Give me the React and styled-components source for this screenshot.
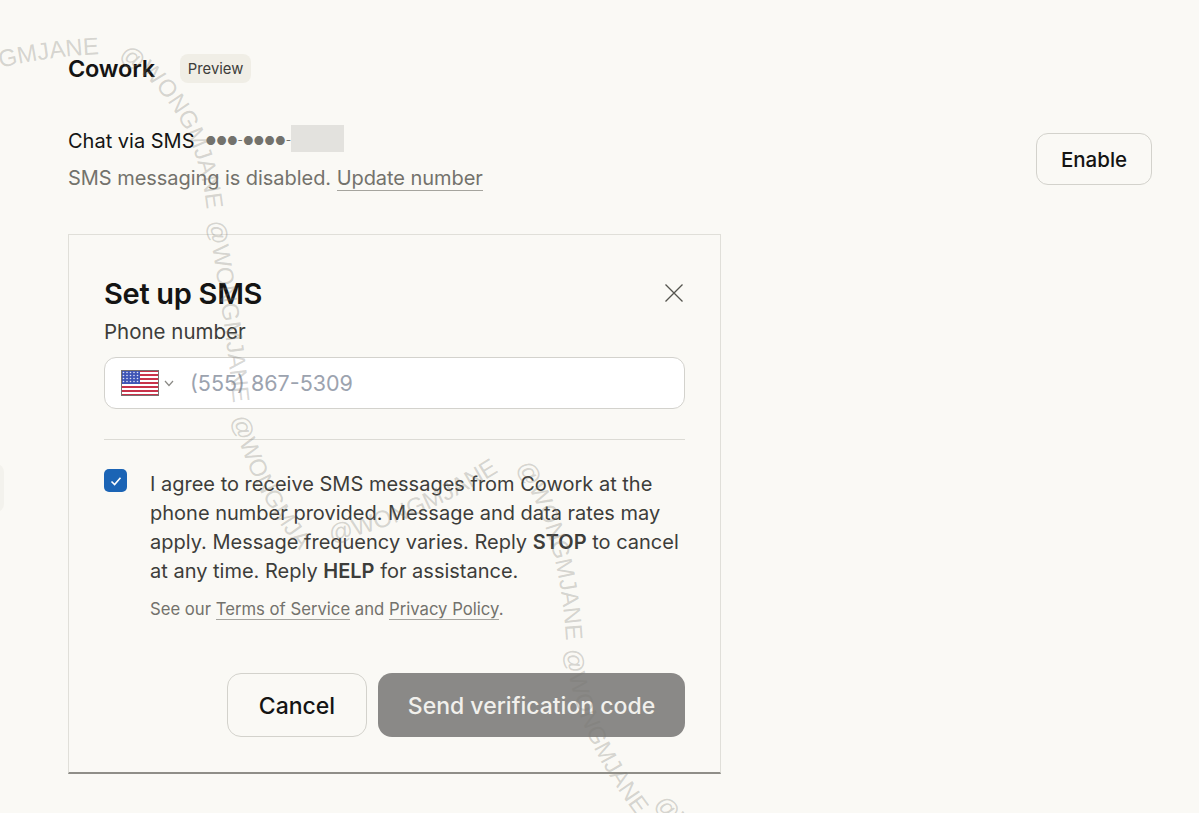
import React from "react";
import styled, { createGlobalStyle } from "styled-components";

const GlobalStyle = createGlobalStyle`
  html, body {
    margin: 0;
    height: 100%;
    overflow: hidden;
    background: #faf9f5;
    font-family: Inter, "Liberation Sans", sans-serif;
    color: #141413;
  }
  * { box-sizing: border-box; }
`;

// the strands of the curved watermark, each long enough for its text
const strands = [
  "M -79 92 C -25 72 35 56 105 54",
  "M 118 58 C 168 85 200 140 207 212",
  "M 208 222 C 216 270 226 330 234 410",
  "M 232 418 C 246 470 268 512 304 556",
  "M 331 542 C 385 530 440 508 495 474",
  "M 516 467 C 545 510 562 570 566 640",
  "M 565 650 C 572 710 595 760 636 815",
  "M 653 806 C 680 830 710 860 760 930",
];

const Watermark = () => (
  <WatermarkLayer viewBox="0 0 1199 813">
    <defs>
      {strands.map((d, i) => (
        <path key={i} id={`strand-${i}`} d={d} />
      ))}
    </defs>
    {strands.map((d, i) => (
      <WatermarkText key={i}>
        <textPath href={`#strand-${i}`}>@WONGMJANE</textPath>
      </WatermarkText>
    ))}
  </WatermarkLayer>
);

const UsFlag = () => (
  <svg width="38" height="26" viewBox="0 0 38 26">
    <rect width="38" height="26" fill="#fff" />
    {[0, 2, 4, 6, 8, 10, 12].map((n) => (
      <rect key={n} y={n * 2} width="38" height="2" fill="#c8334a" />
    ))}
    <rect width="19" height="14" fill="#3f55b5" />
    {[2.5, 5.5, 8.5, 11.5].map((y) =>
      [2.5, 6, 9.5, 13, 16.5].map((x) => (
        <circle key={`${x}-${y}`} cx={x} cy={y} r="0.8" fill="#dfe4f5" />
      ))
    )}
    <rect x="0.5" y="0.5" width="37" height="25" fill="none" stroke="#77706f" />
  </svg>
);

const App = () => (
  <Page>
    <GlobalStyle />
    <Heading>
      <Title>Cowork</Title>
      <Badge>Preview</Badge>
    </Heading>

    <SmsRow>
      <div>
        <ChatLine>
          Chat via SMS
          <Masked>●●●-●●●●-</Masked>
          <Redacted />
        </ChatLine>
        <Status>
          SMS messaging is disabled. <StatusLink>Update number</StatusLink>
        </Status>
      </div>
      <EnableButton>Enable</EnableButton>
    </SmsRow>

    <Card>
      <CardHeader>
        <CardTitle>Set up SMS</CardTitle>
        <svg width="20" height="20" viewBox="0 0 20 20" fill="none" stroke="#55544f" strokeWidth="1.3">
          <path d="M1.5 1.5 L18.5 18.5 M18.5 1.5 L1.5 18.5" />
        </svg>
      </CardHeader>
      <FieldLabel>Phone number</FieldLabel>
      <PhoneInput>
        <UsFlag />
        <ChevronIcon width="12" height="12" viewBox="0 0 12 12" fill="none" stroke="#8a8985" strokeWidth="1.2">
          <path d="M2 4 L6 8.5 L10 4" />
        </ChevronIcon>
        <Placeholder>(555) 867-5309</Placeholder>
      </PhoneInput>
      <Divider />
      <Consent>
        <CheckBox>
          <svg width="14" height="14" viewBox="0 0 14 14" fill="none" stroke="#fff" strokeWidth="1.6">
            <path d="M2.5 7.5 L5.6 10.5 L11.5 3.8" />
          </svg>
        </CheckBox>
        <div>
          <ConsentText>
            I agree to receive SMS messages from Cowork at the
            <br />
            phone number provided. Message and data rates may
            <br />
            apply. Message frequency varies. Reply <strong>STOP</strong> to cancel
            <br />
            at any time. Reply <strong>HELP</strong> for assistance.
          </ConsentText>
          <Legal>
            See our <LegalLink>Terms of Service</LegalLink> and <LegalLink>Privacy Policy</LegalLink>.
          </Legal>
        </div>
      </Consent>
      <Actions>
        <CancelButton>Cancel</CancelButton>
        <SendButton>Send verification code</SendButton>
      </Actions>
    </Card>

    <EdgeTab />
    <Watermark />
  </Page>
);

const Page = styled.div`
  position: relative;
  width: 1199px;
  height: 813px;
  overflow: hidden;
  padding: 53px 47px 0 68px;
`;

const WatermarkLayer = styled.svg`
  position: absolute;
  inset: 0;
  width: 1199px;
  height: 813px;
  pointer-events: none;
`;

const WatermarkText = styled.text`
  font-family: "Liberation Sans", sans-serif;
  font-size: 24px;
  fill: #7a7973;
  fill-opacity: 0.3;
`;

const EdgeTab = styled.div`
  position: absolute;
  left: -20px;
  top: 464px;
  width: 24px;
  height: 48px;
  border-radius: 8px;
  background: #f3f2ed;
`;

const Heading = styled.div`
  display: flex;
  align-items: center;
  gap: 25px;
  height: 30px;
`;

const Title = styled.h1`
  margin: 0;
  font-size: 23.5px;
  font-weight: 600;
  letter-spacing: -0.2px;
`;

const Badge = styled.span`
  display: flex;
  align-items: center;
  height: 29px;
  padding: 2px 8px 0;
  border-radius: 8px;
  background: #f0eee6;
  font-size: 14.8px;
  color: #3d3d3a;
`;

const SmsRow = styled.div`
  display: flex;
  justify-content: space-between;
  align-items: center;
  margin-top: 41px;
  height: 70px;
`;

const ChatLine = styled.div`
  display: flex;
  align-items: center;
  height: 27px;
  margin-top: -1px;
  font-size: 20px;
`;

const Masked = styled.span`
  margin-left: 11px;
  font-size: 11.7px;
  color: #73726c;
`;

const Redacted = styled.span`
  width: 53px;
  height: 27px;
  margin-top: -5px;
  background: #e3e2de;
`;

const Status = styled.div`
  margin-top: 11px;
  font-size: 20px;
  letter-spacing: -0.05px;
  color: #73726c;
`;

const StatusLink = styled.span`
  border-bottom: 1px solid #a5a49e;
`;

const EnableButton = styled.button`
  width: 116px;
  height: 52px;
  border: 1px solid #d3d2cc;
  border-radius: 12px;
  background: transparent;
  font: 500 20.5px Inter, sans-serif;
  color: #141413;
`;

const Card = styled.section`
  width: 653px;
  height: 540px;
  margin-top: 40px;
  padding: 39px 35px 0;
  border: 1px solid #e0dfd9;
  border-bottom: 2px solid #8f8e88;
`;

const CardHeader = styled.div`
  display: flex;
  justify-content: space-between;
  align-items: center;
  height: 38px;
  padding-right: 1px;
`;

const CardTitle = styled.h2`
  margin: 0;
  font-size: 29px;
  font-weight: 600;
  letter-spacing: -0.3px;
`;

const FieldLabel = styled.div`
  margin-top: 7px;
  font-size: 20.5px;
  line-height: 26px;
  color: #3d3d3a;
`;

const PhoneInput = styled.div`
  display: flex;
  align-items: center;
  height: 52px;
  margin-top: 12px;
  padding-left: 16px;
  border: 1px solid #d3d2cd;
  border-radius: 12px;
  background: #fff;
`;

const ChevronIcon = styled.svg`
  margin-left: 4px;
`;

const Placeholder = styled.span`
  margin-left: 15px;
  font-size: 21.5px;
  color: #9ca3af;
`;

const Divider = styled.hr`
  margin: 30px 0 29px;
  border: 0;
  border-top: 1px solid #dcdbd5;
`;

const Consent = styled.div`
  display: flex;
  gap: 23px;
`;

const CheckBox = styled.span`
  display: flex;
  align-items: center;
  justify-content: center;
  flex: none;
  width: 23px;
  height: 23px;
  border-radius: 5px;
  background: #1b64b5;
`;

const ConsentText = styled.p`
  margin: 1px 0 0;
  font-size: 20px;
  line-height: 29px;
  white-space: nowrap;
  color: #3d3d3a;

  strong {
    font-weight: 600;
  }
`;

const Legal = styled.p`
  margin: 11px 0 0;
  font-size: 16.7px;
  line-height: 24px;
  color: #73726c;
`;

const LegalLink = styled.span`
  border-bottom: 1px solid #a5a49e;
`;

const Actions = styled.div`
  display: flex;
  justify-content: flex-end;
  gap: 11px;
  margin-top: 52px;
`;

const CancelButton = styled.button`
  width: 140px;
  height: 64px;
  padding-top: 3px;
  border: 1px solid #d3d2cc;
  border-radius: 14px;
  background: transparent;
  font: 500 23px Inter, sans-serif;
  color: #141413;
`;

const SendButton = styled.button`
  width: 307px;
  height: 64px;
  padding-top: 3px;
  border: 0;
  border-radius: 14px;
  background: #8a8987;
  font: 500 23px Inter, sans-serif;
  color: #f1f0ec;
`;

export default App;
